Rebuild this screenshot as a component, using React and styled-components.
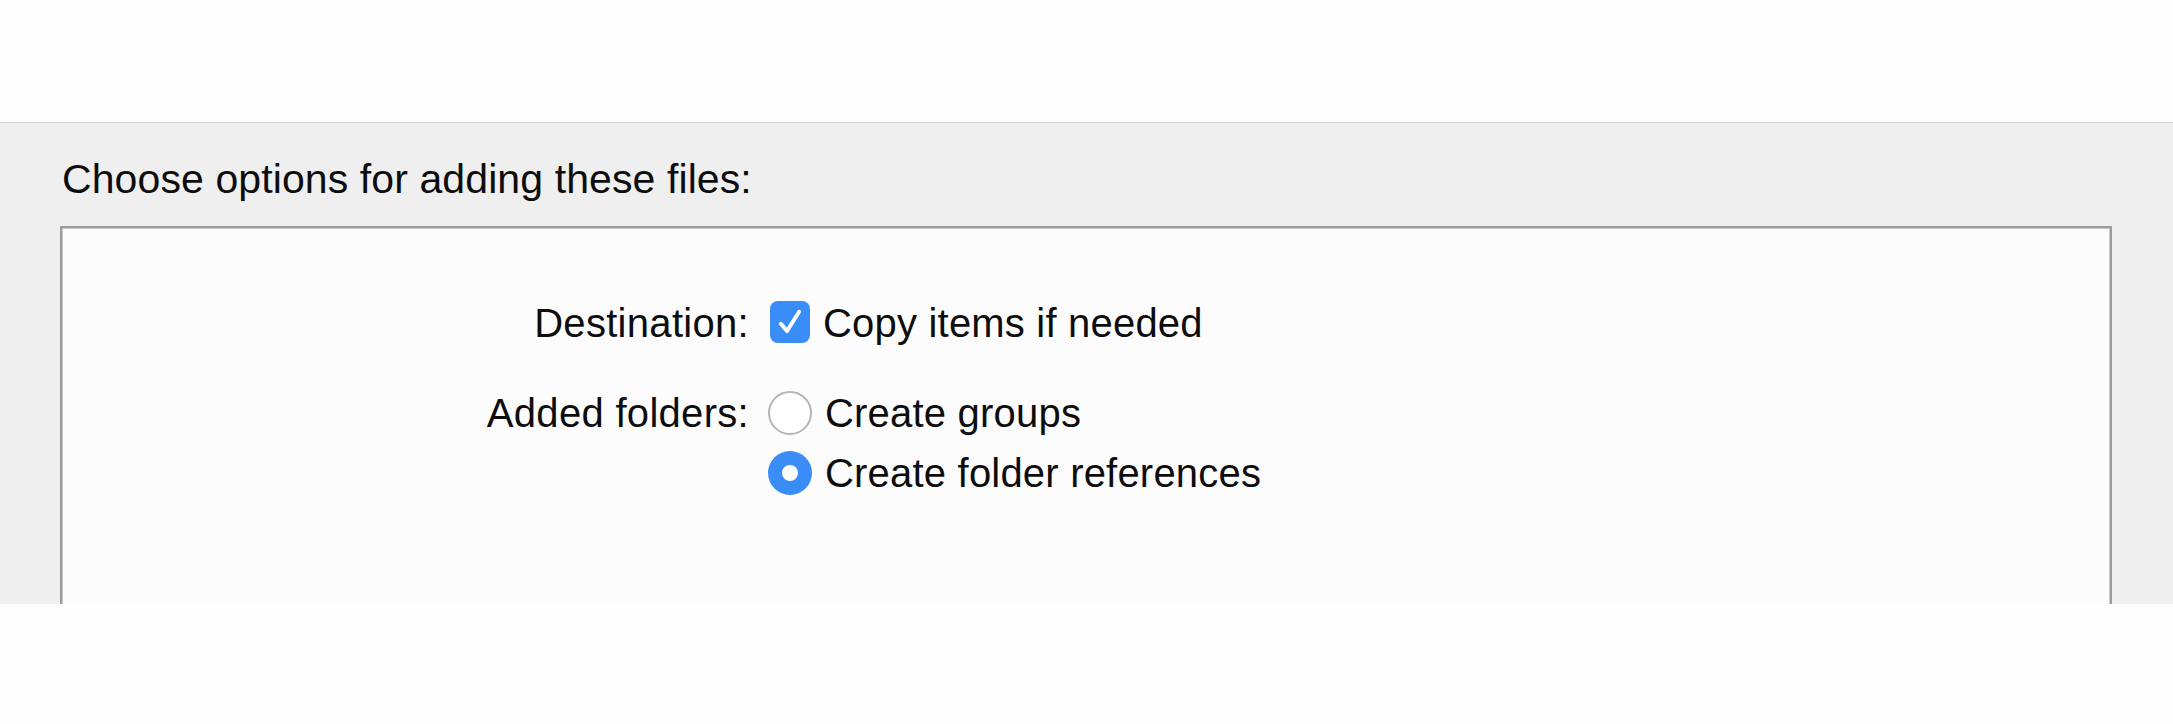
import React from "react";
import styled, { createGlobalStyle } from "styled-components";

const GlobalStyle = createGlobalStyle`
  html, body {
    margin: 0;
    padding: 0;
    background: #fdfdfd;
  }
  body {
    font-family: "Liberation Sans", Arial, sans-serif;
    color: #0d0d0d;
  }
`;

const Page = styled.div`
  display: flex;
  flex-direction: column;
  width: 100%;
  height: 724px;
`;

const TopArea = styled.div`
  height: 122px;
  flex-shrink: 0;
  background: #fdfdfd;
  border-bottom: 1px solid #d2d2d2;
`;

const Sheet = styled.section`
  height: 481px;
  flex-shrink: 0;
  display: flex;
  flex-direction: column;
  padding: 0 61px 0 60px;
  background: #efefef;
`;

const Heading = styled.h2`
  margin: 33px 0 24px 2px;
  font-size: 41px;
  font-weight: 400;
  line-height: 46px;
  letter-spacing: 0.1px;
`;

const OptionsBox = styled.div`
  flex: 1;
  background: #fcfcfc;
  border: 2px solid #9c9c9c;
  border-bottom: none;
  box-shadow: inset 1px 1px 0 #c8c8c8, inset -1px 0 0 #c8c8c8;
  padding-top: 73px;
`;

const Form = styled.div`
  display: grid;
  grid-template-columns: 687px auto;
  column-gap: 19px;
  row-gap: 46px;
  align-items: start;
`;

const Label = styled.div`
  text-align: right;
  font-size: 40px;
  line-height: 44px;
  letter-spacing: 0.3px;
  white-space: nowrap;
`;

const Choices = styled.div`
  display: flex;
  flex-direction: column;
  gap: 16px;
`;

const Option = styled.label`
  display: flex;
  align-items: center;
  gap: 13px;
  height: 44px;
  font-size: 40px;
  line-height: 44px;
  letter-spacing: 0.2px;
  white-space: nowrap;
`;

const CheckBox = styled.span`
  width: 40px;
  height: 42px;
  margin-left: ${(p) => p.$offset || 0}px;
  border-radius: 8px;
  background: ${(p) => (p.$checked ? "#3a8cf6" : "#ffffff")};
  border: ${(p) => (p.$checked ? "none" : "2px solid #b3b3b3")};
  display: flex;
  align-items: center;
  justify-content: center;
  flex-shrink: 0;
  margin-top: -2px;
`;

const Radio = styled.span`
  width: 44px;
  height: 44px;
  box-sizing: border-box;
  border-radius: 50%;
  flex-shrink: 0;
  display: flex;
  align-items: center;
  justify-content: center;
  background: ${(p) => (p.$checked ? "#3a8cf6" : "#ffffff")};
  border: ${(p) => (p.$checked ? "none" : "2px solid #b5b5b5")};

  &::after {
    content: "";
    display: ${(p) => (p.$checked ? "block" : "none")};
    width: 16px;
    height: 16px;
    border-radius: 50%;
    background: #ffffff;
  }
`;

const Check = () => (
  <svg width="34" height="34" viewBox="0 0 28 28" fill="none">
    <path
      d="M6.5 15.5 L11.5 21.5 L21.5 5.5"
      stroke="#ffffff"
      strokeWidth="3.2"
      strokeLinecap="round"
      strokeLinejoin="round"
    />
  </svg>
);

export default function App() {
  return (
    <>
      <GlobalStyle />
      <Page>
        <TopArea />
        <Sheet>
          <Heading>Choose options for adding these files:</Heading>
          <OptionsBox>
            <Form>
              <Label>Destination:</Label>
              <Option>
                <CheckBox $checked $offset={2}>
                  <Check />
                </CheckBox>
                Copy items if needed
              </Option>

              <Label>Added folders:</Label>
              <Choices>
                <Option>
                  <Radio />
                  Create groups
                </Option>
                <Option>
                  <Radio $checked />
                  Create folder references
                </Option>
              </Choices>
            </Form>
          </OptionsBox>
        </Sheet>
      </Page>
    </>
  );
}
